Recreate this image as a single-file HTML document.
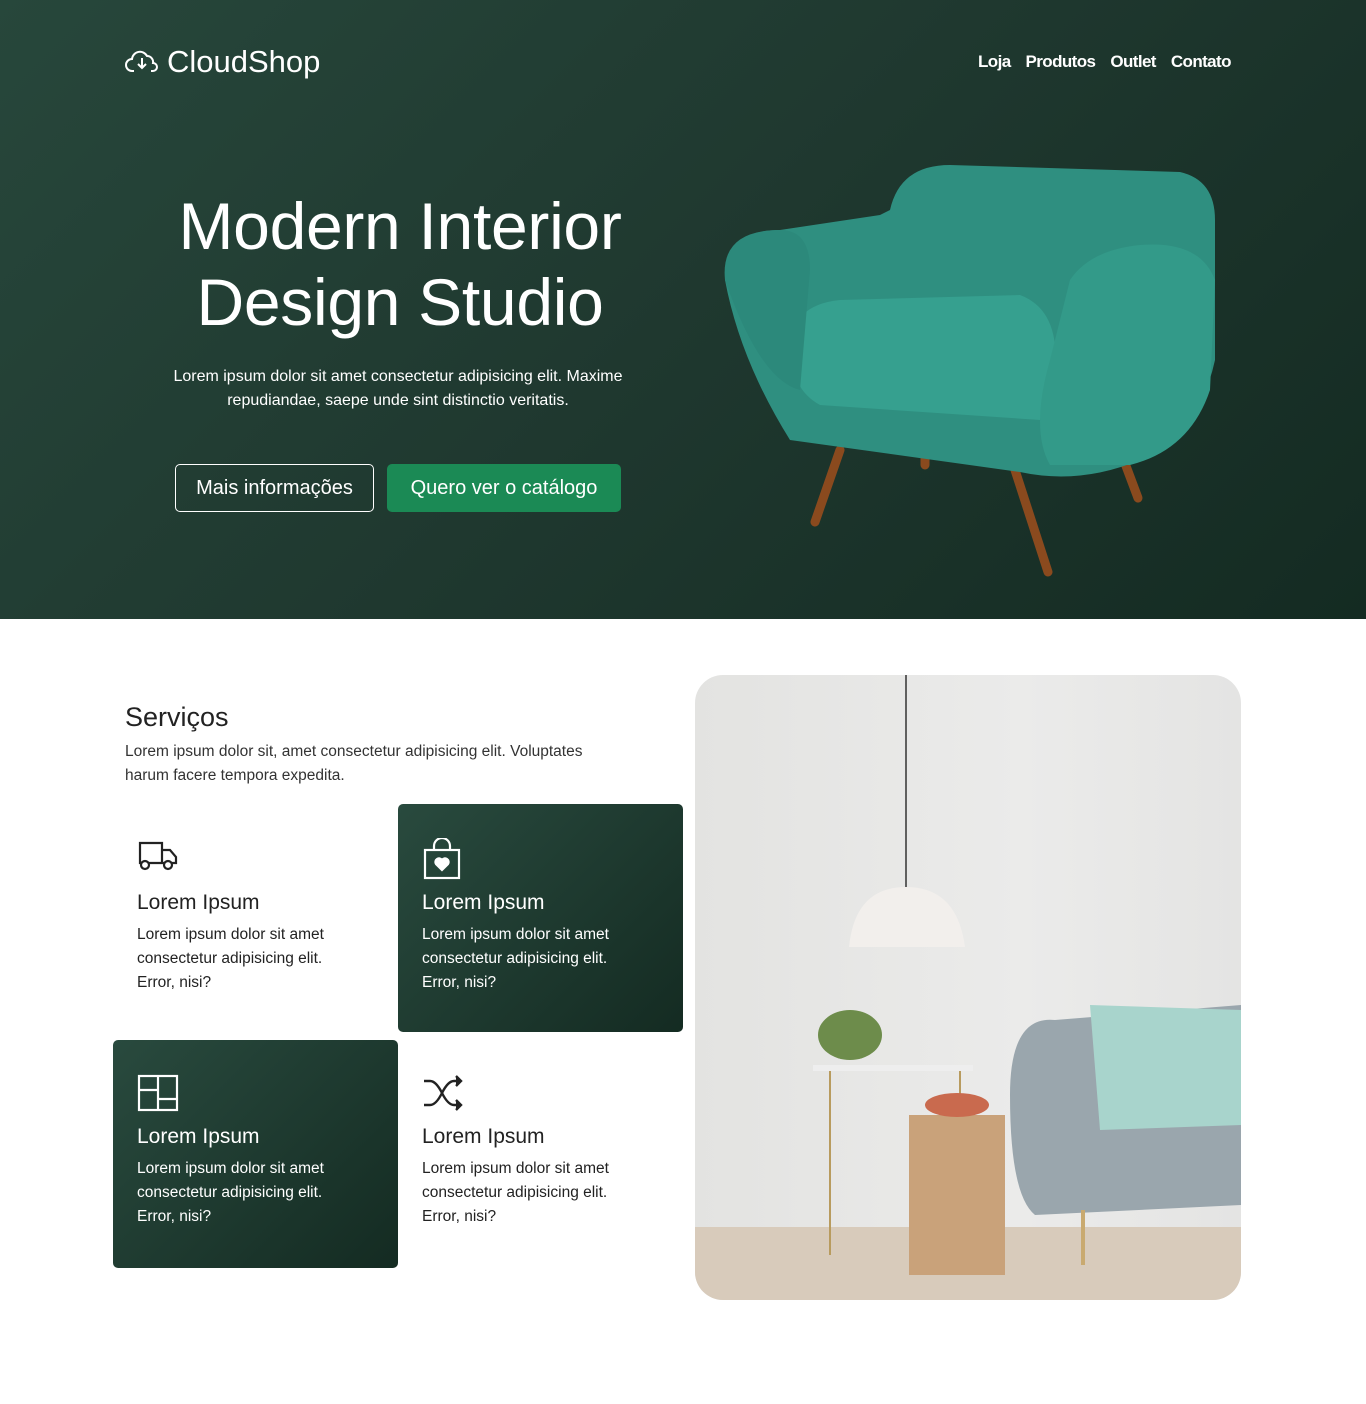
<!DOCTYPE html>
<html><head><meta charset="utf-8"><style>
*{margin:0;padding:0;box-sizing:border-box}
body{width:1366px;height:1404px;background:#fff;font-family:"Liberation Sans",sans-serif;position:relative;overflow:hidden}
.hero{position:absolute;left:0;top:0;width:1366px;height:619px;background:linear-gradient(135deg,#27473b 0%,#1f382f 50%,#142b22 100%)}
.abs{position:absolute}
.logo{left:125px;top:44px;color:#fff;font-size:31px;display:flex;align-items:center;gap:8px}
.nav{top:52px;left:978px;color:#fff;font-weight:bold;font-size:17px;letter-spacing:-0.6px}
.nav span{margin-right:15px}
h1{position:absolute;left:120px;width:560px;top:188px;color:#fff;font-weight:normal;font-size:66px;line-height:76px;text-align:center;letter-spacing:-0.3px}
.sub{left:140px;width:516px;top:365px;color:#fff;font-size:16px;line-height:24px;text-align:center}
.btn{top:464px;height:48px;border-radius:5px;color:#fff;font-size:20px;line-height:46px;text-align:center}
.b1{left:175px;width:199px;border:1px solid #fff}
.b2{left:387px;width:234px;background:#1b8a55;border:1px solid #1b8a55}
.h2{left:125px;top:702px;font-size:27px;color:#222}
.p{left:125px;top:740px;width:495px;font-size:15.5px;line-height:24px;color:#333}
.card{width:285px;height:228px;border-radius:5px;padding:34px 24px}
.card .t{font-size:21px;margin-top:14px;margin-bottom:8px}
.card .d{font-size:15.5px;line-height:24px;width:215px}
.dark{background:linear-gradient(135deg,#294a3e,#142b22);color:#fff}
.light{color:#222}
.photo{left:695px;top:675px;width:546px;height:625px;border-radius:28px;overflow:hidden;background:linear-gradient(90deg,#e3e3e1,#ebebea 60%,#e4e4e3)}
</style></head><body>
<div class="hero"></div>
<div class="abs logo"><svg width="34" height="26" viewBox="0 0 34 26" fill="none" stroke="#fff" stroke-width="2"><path d="M9 22H7a6 6 0 0 1 0-12 8 8 0 0 1 15-3 6 6 0 0 1 6 7 4 4 0 0 1 0 8h-2"/><path d="M17 9v10M13 15l4 4 4-4"/></svg><span>CloudShop</span></div>
<div class="abs nav"><span>Loja</span><span>Produtos</span><span>Outlet</span><span>Contato</span></div>
<h1>Modern Interior Design Studio</h1>
<div class="abs sub">Lorem ipsum dolor sit amet consectetur adipisicing elit. Maxime repudiandae, saepe unde sint distinctio veritatis.</div>
<div class="abs btn b1">Mais informações</div>
<div class="abs btn b2">Quero ver o catálogo</div>
<svg class="abs" style="left:720px;top:160px" width="500" height="420" viewBox="0 0 500 420">
<g stroke="#8a4a1e" stroke-width="9" stroke-linecap="round"><line x1="120" y1="290" x2="95" y2="362"/><line x1="295" y1="310" x2="328" y2="412"/><line x1="400" y1="290" x2="418" y2="338"/><line x1="205" y1="295" x2="205" y2="305"/></g>
<path d="M170 50 Q180 5 230 5 L460 12 Q495 20 495 60 L495 200 Q480 270 420 300 Q360 325 300 312 L70 280 Q20 200 5 120 Q5 70 60 70 L160 55Z" fill="#2f8f80"/>
<path d="M70 190 Q70 145 120 140 L300 135 Q340 150 335 210 L320 260 L100 245 Q72 230 70 190Z" fill="#36a08f"/>
<path d="M350 120 Q370 90 420 85 Q480 80 495 120 L490 230 Q470 290 410 305 L330 305 Q310 270 330 200Z" fill="#339a89"/>
<path d="M5 120 Q0 70 60 70 Q90 70 90 110 L80 230 Q40 220 5 120Z" fill="#2c897b"/>
</svg>
<div class="abs h2">Serviços</div>
<div class="abs p">Lorem ipsum dolor sit, amet consectetur adipisicing elit. Voluptates harum facere tempora expedita.</div>
<div class="abs card light" style="left:113px;top:804px"><svg width="42" height="34" viewBox="0 0 42 34" fill="none" stroke="#222" stroke-width="2.2"><path d="M3 5h22v20H3zM25 12h8l6 7v6h-14"/><circle cx="8" cy="27" r="4" fill="#fff"/><circle cx="31" cy="27" r="4" fill="#fff"/></svg><div class="t">Lorem Ipsum</div><div class="d">Lorem ipsum dolor sit amet consectetur adipisicing elit. Error, nisi?</div></div>
<div class="abs card dark" style="left:398px;top:804px"><svg width="40" height="42" viewBox="0 0 40 42" fill="none" stroke="#fff" stroke-width="2.2"><rect x="3" y="12" width="34" height="28"/><path d="M12 12V8a8 8 0 0 1 16 0v4"/><path d="M20 32l-6-6a3.5 3.5 0 0 1 6-4 3.5 3.5 0 0 1 6 4z" fill="#fff"/></svg><div class="t" style="margin-top:6px">Lorem Ipsum</div><div class="d">Lorem ipsum dolor sit amet consectetur adipisicing elit. Error, nisi?</div></div>
<div class="abs card dark" style="left:113px;top:1040px"><svg width="42" height="38" viewBox="0 0 42 38" fill="none" stroke="#fff" stroke-width="2.2"><rect x="2" y="2" width="38" height="34"/><path d="M21 2v34M2 16h19M21 25h19"/></svg><div class="t" style="margin-top:8px">Lorem Ipsum</div><div class="d">Lorem ipsum dolor sit amet consectetur adipisicing elit. Error, nisi?</div></div>
<div class="abs card light" style="left:398px;top:1040px"><svg width="42" height="38" viewBox="0 0 42 38" fill="none" stroke="#222" stroke-width="2.4"><path d="M2 7h6q6 0 12 12t12 12h6M2 31h6q6 0 12-12t12-12h6"/><path d="M34 2l5 5-5 5M34 26l5 5-5 5" fill="#222"/></svg><div class="t" style="margin-top:8px">Lorem Ipsum</div><div class="d">Lorem ipsum dolor sit amet consectetur adipisicing elit. Error, nisi?</div></div>
<div class="abs photo">
<svg width="546" height="625" viewBox="0 0 546 625">
<rect y="552" width="546" height="73" fill="#d8cbbb"/>
<line x1="211" y1="0" x2="211" y2="212" stroke="#333" stroke-width="1.5"/>
<path d="M154 272 Q160 212 211 212 Q262 212 270 272Z" fill="#f2efec"/>
<rect x="118" y="390" width="160" height="6" fill="#eee"/>
<g stroke="#b89b5e" stroke-width="2"><line x1="135" y1="396" x2="135" y2="580"/><line x1="265" y1="396" x2="265" y2="580"/></g>
<ellipse cx="155" cy="360" rx="32" ry="25" fill="#6d8c4b"/>
<rect x="214" y="440" width="96" height="160" fill="#c9a27a"/>
<ellipse cx="262" cy="430" rx="32" ry="12" fill="#c96a4e"/>
<path d="M315 420 Q315 340 360 345 L546 330 L546 530 L340 540 Q315 520 315 420Z" fill="#9aa6ad"/>
<path d="M395 330 L546 335 L546 450 L405 455Z" fill="#a8d4cc"/>
<rect x="386" y="535" width="4" height="55" fill="#c9aa70"/>
</svg>
</div>
</body></html>
